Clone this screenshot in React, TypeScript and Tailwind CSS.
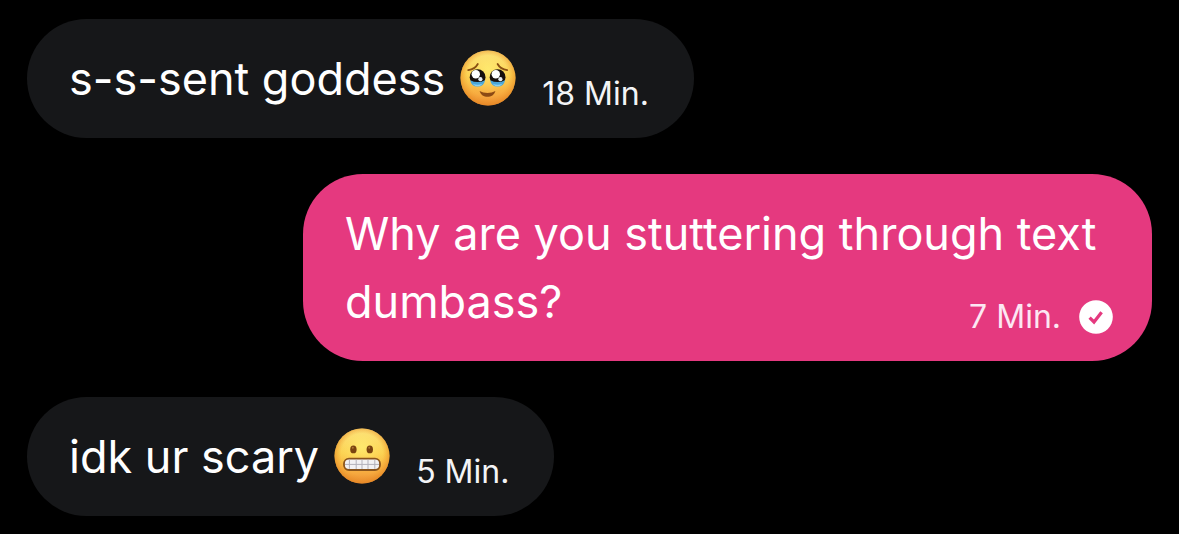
import type { ReactNode } from 'react';
import { clsx } from 'clsx';

const Face = ({ id }: { id: string }) => (
    <>
        <defs>
            <linearGradient id={`${id}-face`} x1="0" y1="0" x2="0" y2="1">
                <stop offset="0" stopColor="#fbdc7c" />
                <stop offset="0.45" stopColor="#fcd04f" />
                <stop offset="0.8" stopColor="#f7ab40" />
                <stop offset="1" stopColor="#ec8f36" />
            </linearGradient>
            <radialGradient id={`${id}-rim`} cx="0.5" cy="0.47" r="0.54">
                <stop offset="0.7" stopColor="#f09a2c" stopOpacity="0" />
                <stop offset="1" stopColor="#e38420" stopOpacity="0.8" />
            </radialGradient>
            <radialGradient id={`${id}-glow`} cx="0.5" cy="0.34" r="0.45">
                <stop offset="0" stopColor="#fff074" stopOpacity="0.75" />
                <stop offset="1" stopColor="#ffe66a" stopOpacity="0" />
            </radialGradient>
        </defs>
        <circle cx="28" cy="28" r="27.5" fill={`url(#${id}-face)`} />
        <circle cx="28" cy="28" r="27.5" fill={`url(#${id}-glow)`} />
        <circle cx="28" cy="28" r="27.5" fill={`url(#${id}-rim)`} />
    </>
);

const TearyEye = ({ cx }: { cx: number }) => (
    <g>
        <circle cx={cx} cy="27.2" r="7.9" fill="#17100d" />
        <path
            d={`M${cx - 7.4} 30.2 Q${cx} 34 ${cx + 7.4} 30.2 Q${cx + 6.4} 36.4 ${cx} 36.6 Q${cx - 6.4} 36.4 ${cx - 7.4} 30.2Z`}
            fill="#4aa6d8"
        />
        <path
            d={`M${cx - 5.2} 33.4 Q${cx} 36 ${cx + 5.2} 33.4 Q${cx + 3} 36.2 ${cx} 36.2 Q${cx - 3} 36.2 ${cx - 5.2} 33.4Z`}
            fill="#8cd0ee"
        />
        <circle cx={cx - 1.8} cy="24.2" r="4.2" fill="#fff" />
        <circle cx={cx + 2.8} cy="29.2" r="2.1" fill="#e8edf3" />
    </g>
);

const HoldingBackTears = () => (
    <svg viewBox="0 0 56 56" role="img" aria-label="Face holding back tears" className="ml-[15px] inline-block size-14 align-[-11px]">
        <Face id="tears" />
        <g fill="none" stroke="#8a4f12" strokeWidth="1.8" strokeLinecap="round">
            <path d="M8.2 20.2 C12 19.6 16 17.4 17.8 14" />
            <path d="M47.2 20.2 C43.4 19.6 39.4 17.4 37.6 14" />
        </g>
        <TearyEye cx={17.6} />
        <TearyEye cx={37.6} />
        <path d="M19.6 41 C24 43.6 31 43.6 35.4 41 C33.6 48.8 21.4 48.8 19.6 41Z" fill="#8c4a14" />
    </svg>
);

const Grimacing = () => (
    <svg viewBox="0 0 56 56" role="img" aria-label="Grimacing face" className="ml-[15px] inline-block size-14 align-[-11px]">
        <Face id="grimace" />
        <g fill="#7a4310">
            <ellipse cx="19.4" cy="21.4" rx="3.2" ry="3.9" />
            <ellipse cx="35.8" cy="21.4" rx="3.2" ry="3.9" />
        </g>
        <g fill="#b07a34">
            <circle cx="18.8" cy="19.8" r="1" />
            <circle cx="35.2" cy="19.8" r="1" />
        </g>
        <rect x="10" y="30.6" width="36" height="11.4" rx="5" fill="#f3f2f4" stroke="#8a541c" strokeWidth="1.8" />
        <g stroke="#b3b1ba" strokeWidth="1" fill="none">
            <path d="M11 36.4H45" />
            <path d="M15.4 31.8V40.8M22.2 31.6V41M28 31.6V41M34 31.6V41M40.8 31.8V40.8" />
        </g>
    </svg>
);

const SeenBadge = () => (
    <svg viewBox="0 0 34 34" role="img" aria-label="Seen" className="size-[34px] shrink-0">
        <circle cx="17" cy="17" r="16.8" fill="#fff" />
        <path d="M10.6 17.6 L15 22 L22.6 12.2" fill="none" stroke="#e5397f" strokeWidth="3.2" />
    </svg>
);

type MessageProps = {
    text: string;
    time: string;
    emoji?: ReactNode;
    own?: boolean;
};

function Message({ text, time, emoji, own = false }: MessageProps) {
    return (
        <li
            className={clsx(
                'flow-root max-w-[849px] rounded-[60px] pt-[26px] pb-[25px] pl-[42px] text-[45px] leading-[68px] text-white',
                own ? 'self-end bg-[#e5397f] pr-[39px]' : 'self-start bg-[#161719] pr-[45px]'
            )}
        >
            <span>{text}</span>
            {emoji}
            {/* floats to the end of the last line when there is room for it */}
            <span
                className={clsx(
                    'float-right ml-[26px] flex h-[68px] items-center gap-[18px] pt-[30px] text-[32px] leading-9',
                    own ? 'text-pink-100' : 'text-gray-100'
                )}
            >
                <time>{time}</time>
                {own && <SeenBadge />}
            </span>
        </li>
    );
}

export default function App() {
    return (
        <main className="min-h-screen bg-black px-[27px] pt-[19px] pb-4 font-['Inter',sans-serif]">
            <ul className="flex flex-col gap-9">
                <Message text="s-s-sent goddess" emoji={<HoldingBackTears />} time="18 Min." />
                <Message text="Why are you stuttering through text dumbass?" time="7 Min." own />
                <Message text="idk ur scary" emoji={<Grimacing />} time="5 Min." />
            </ul>
        </main>
    );
}
